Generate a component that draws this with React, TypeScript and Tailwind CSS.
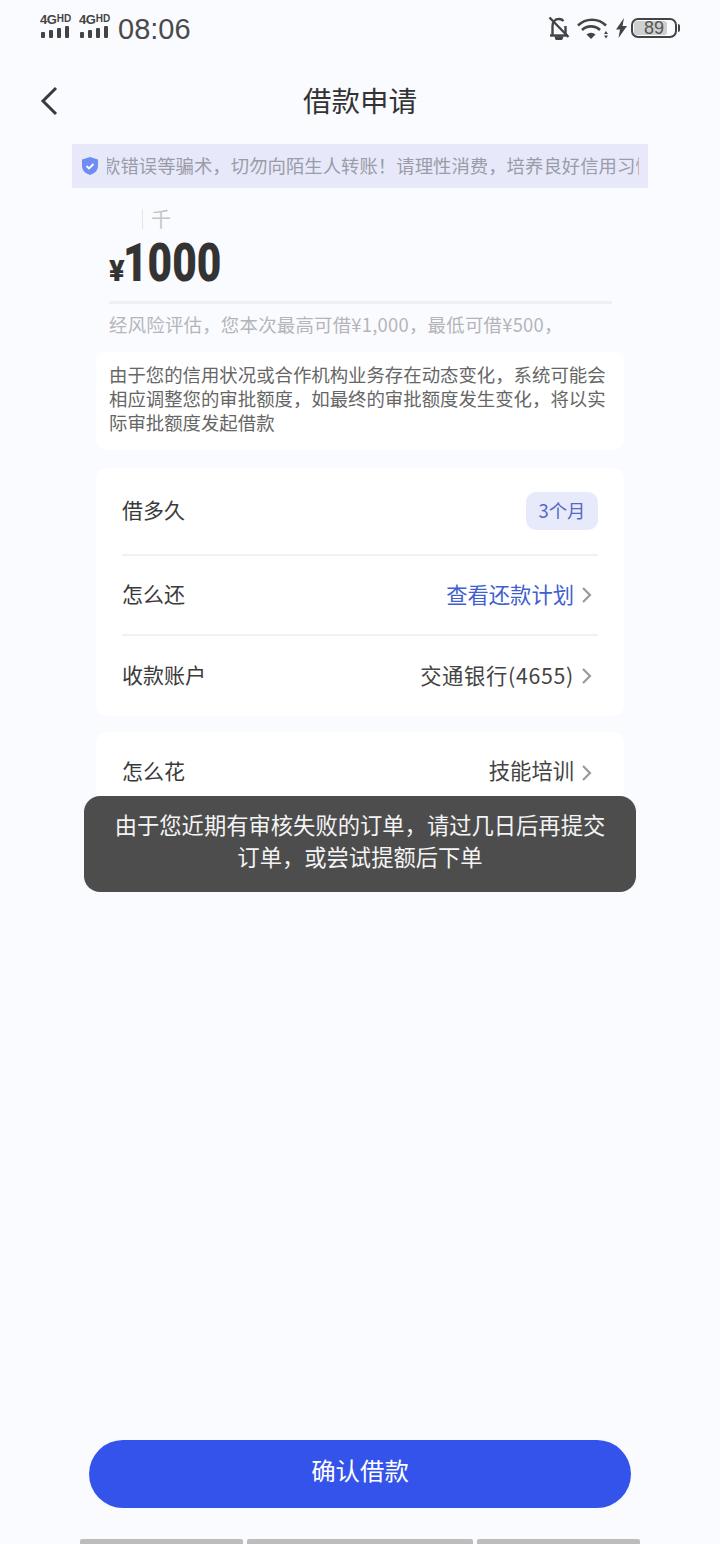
const FONT = "font-['Noto_Sans_CJK_SC','Noto_Sans',sans-serif]";

function Chevron({ className = "" }: { className?: string }) {
  return (
    <svg width="11" height="18" viewBox="0 0 11 18" fill="none" className={className}>
      <path d="M2 2l7 7-7 7" stroke="#9a9a9a" strokeWidth="2.2" />
    </svg>
  );
}

function Signal() {
  return (
    <div className="flex flex-col w-[31px] h-[24px] mb-[4px]">
      <div className="flex items-start h-[12px] leading-[12px] font-['Liberation_Sans'] font-bold text-[#444]">
        <span className="text-[13px] leading-[12px] tracking-[-0.5px]">4G</span>
        <span className="text-[10px] leading-[9px] ml-[0.5px]">HD</span>
      </div>
      <svg width="30" height="12" viewBox="0 0 30 12" fill="#444">
        <rect x="1" y="6" width="4" height="6" rx="1" />
        <rect x="9" y="4" width="4" height="8" rx="1" />
        <rect x="17" y="2" width="4" height="10" rx="1" />
        <rect x="25" y="0" width="4" height="12" rx="1" />
      </svg>
    </div>
  );
}

function StatusBar() {
  return (
    <div className="h-[56px] shrink-0 flex items-center justify-between px-[40px]">
      <div className="flex items-center gap-[8px]">
        <Signal />
        <Signal />
        <span className="font-['Liberation_Sans'] text-[29px] leading-[32px] text-[#4a4a4a] mt-[2px]">08:06</span>
      </div>
      <div className="flex items-center">
        <svg width="22" height="24" viewBox="0 0 22 24" fill="none" stroke="#444" strokeWidth="2.4" className="mr-[6px]">
          <path d="M4.500 19V10c0-4 2.500-7 6.500-7 2 0 3.500.8 4.500 2M17.500 10v9" />
          <path d="M2 19.500h18" />
          <path d="M8 21.500a3 2 0 0 0 6 0z" fill="#444" />
          <path d="M1.500 1.500l19 19.500" />
        </svg>
        <svg width="32" height="24" viewBox="0 0 32 24" fill="none" stroke="#444" strokeWidth="2.6" className="mr-[7px]">
          <path d="M2 9.500a20 20 0 0 1 28 0" />
          <path d="M6 14a13 13 0 0 1 18 0" />
          <path d="M10.500 18.500a7 7 0 0 1 9 0L15 23z" fill="#444" stroke="none" />
          <path d="M28 18l2-3 2 3zM28 19.500h4l-2 3z" fill="#444" stroke="none" />
        </svg>
        <svg width="13" height="22" viewBox="0 0 13 22" fill="#444" className="mr-[3px]">
          <path d="M9 1L1 12.500h4L3.500 21 12 9H7.500z" />
        </svg>
        <div className="relative w-[46px] h-[20px] rounded-[7px] border-2 border-[#444] overflow-hidden flex items-center justify-center">
          <div className="absolute left-[1px] top-[1px] bottom-[1px] w-[33px] rounded-[3px] bg-[#cfcfcf]" />
          <span className="relative font-['Liberation_Sans'] text-[18px] leading-[16px] text-[#555]">89</span>
        </div>
        <div className="w-[2px] h-[8px] bg-[#444] rounded-r-[2px] ml-[1px]" />
      </div>
    </div>
  );
}

function Row({ label, height, children }: { label: string; height: string; children: React.ReactNode }) {
  return (
    <div className={`flex items-center justify-between ${height}`}>
      <span className="text-[21px] leading-[28px] text-[#3a3a3a] mb-[4px]">{label}</span>
      <div className="flex items-center">{children}</div>
    </div>
  );
}

export default function App() {
  return (
    <div className={`relative h-[1544px] w-[720px] overflow-hidden flex flex-col bg-[#fafbff] ${FONT}`}>
      <StatusBar />

      <div className="relative h-[88px] shrink-0 flex items-center justify-center">
        <svg width="18" height="30" viewBox="0 0 18 30" fill="none" className="absolute left-[40px] top-[30px]">
          <path d="M16 2L3 15l13 13" stroke="#3a3a3a" strokeWidth="3" />
        </svg>
        <span className="text-[28.500px] leading-[36px] text-[#333]">借款申请</span>
      </div>

      <div className="mx-[72px] h-[44px] shrink-0 bg-[#e7e9fb] flex items-center px-[9px]">
        <svg width="18" height="20" viewBox="0 0 18 20" className="shrink-0 mr-[8px]">
          <path d="M9 1l8 2.500V10c0 4.500-3.500 7.500-8 9-4.500-1.500-8-4.500-8-9V3.500z" fill="#6f8cf2" />
          <path d="M5.500 10l2.500 2.500 4.500-4.500" stroke="#fff" strokeWidth="1.800" fill="none" />
        </svg>
        <div className="flex-1 overflow-hidden whitespace-nowrap text-[18.400px] leading-[24px] text-[#9a9ca6] pb-[2px]">
          <span className="inline-block -ml-[5px]">款错误等骗术，切勿向陌生人转账！请理性消费，培养良好信用习惯</span>
        </div>
      </div>

      <div className="mx-[109px] w-[503px] shrink-0 pt-[19px]">
        <div className="flex items-center h-[24px] pl-[33px]">
          <div className="w-[1px] h-[20px] bg-[#e4e5e8]" />
          <span className="ml-[8px] text-[20px] leading-[24px] text-[#c4c5c9]">千</span>
        </div>
        <div className="flex items-baseline h-[71px] pt-[3px]">
          <span className="font-['Roboto'] font-black text-[29px] leading-[40px] text-[#333]">¥</span>
          <span className="font-['Roboto'] font-black text-[53px] leading-[59px] text-[#333] -ml-[2px] inline-block origin-left scale-x-[0.8]">1000</span>
        </div>
        <div className="h-[3px] -mt-[1px] bg-[#eeeff2] rounded-full" />
      </div>

      <div className="mx-[109px] mt-[8px] h-[24px] shrink-0 text-[18.400px] leading-[24px] tracking-[0.25px] text-[#b4b5ba] whitespace-nowrap">
        经风险评估，您本次最高可借¥1,000，最低可借¥500，
      </div>

      <div className="mx-[96px] mt-[16px] h-[98px] shrink-0 rounded-[10px] bg-white px-[13px] pt-[10px] text-[18.400px] leading-[24px] text-[#666]">
        由于您的信用状况或合作机构业务存在动态变化，系统可能会相应调整您的审批额度，如最终的审批额度发生变化，将以实际审批额度发起借款
      </div>

      <div className="mx-[96px] mt-[18px] h-[248px] shrink-0 rounded-[10px] bg-white px-[26px]">
        <Row label="借多久" height="h-[88px] border-b-2 border-[#f0f1f3]">
          <span className="h-[38px] w-[72px] rounded-[10px] bg-[#e7eafb] flex items-center justify-center pb-[3px] text-[18.400px] leading-[24px] text-[#5468c8]">3个月</span>
        </Row>
        <Row label="怎么还" height="h-[80px] border-b-2 border-[#f0f1f3]">
          <span className="text-[21.300px] leading-[28px] text-[#3f5fd0] mb-[2px]">查看还款计划</span>
          <Chevron className="ml-[7px] mr-[6px]" />
        </Row>
        <Row label="收款账户" height="h-[80px]">
          <span className="text-[21.300px] leading-[28px] tracking-[0.7px] text-[#444] mb-[2px]">交通银行(4655)</span>
          <Chevron className="ml-[7px] mr-[6px]" />
        </Row>
      </div>

      <div className="mx-[96px] mt-[16px] h-[120px] shrink-0 rounded-[10px] bg-white px-[26px] pt-[24px]">
        <div className="flex items-center justify-between h-[28px]">
          <span className="text-[21px] leading-[28px] text-[#3a3a3a]">怎么花</span>
          <div className="flex items-center">
            <span className="text-[21.300px] leading-[28px] text-[#444]">技能培训</span>
            <Chevron className="ml-[7px] mr-[6px] mt-[6px]" />
          </div>
        </div>
      </div>

      <div className="flex-1" />

      <div className="mx-[89px] h-[68px] shrink-0 rounded-full bg-[#3353ea] flex items-center justify-center pb-[8px] text-[24.400px] leading-[32px] text-white">
        确认借款
      </div>

      <div className="mt-[31px] mx-[80px] h-[5px] shrink-0 flex gap-[4px]">
        <div className="w-[163px] bg-[#bdbdbd] rounded-t-[2px]" />
        <div className="w-[226px] bg-[#bdbdbd] rounded-t-[2px]" />
        <div className="flex-1 bg-[#bdbdbd] rounded-t-[2px]" />
      </div>

      <div className="absolute left-[84px] top-[796px] w-[552px] h-[96px] rounded-[16px] bg-[#4d4d4d] flex items-center justify-center px-[28px] pb-[9px] text-center text-[22.300px] leading-[32px] text-[#f4f4f4]">
        由于您近期有审核失败的订单，请过几日后再提交订单，或尝试提额后下单
      </div>
    </div>
  );
}
